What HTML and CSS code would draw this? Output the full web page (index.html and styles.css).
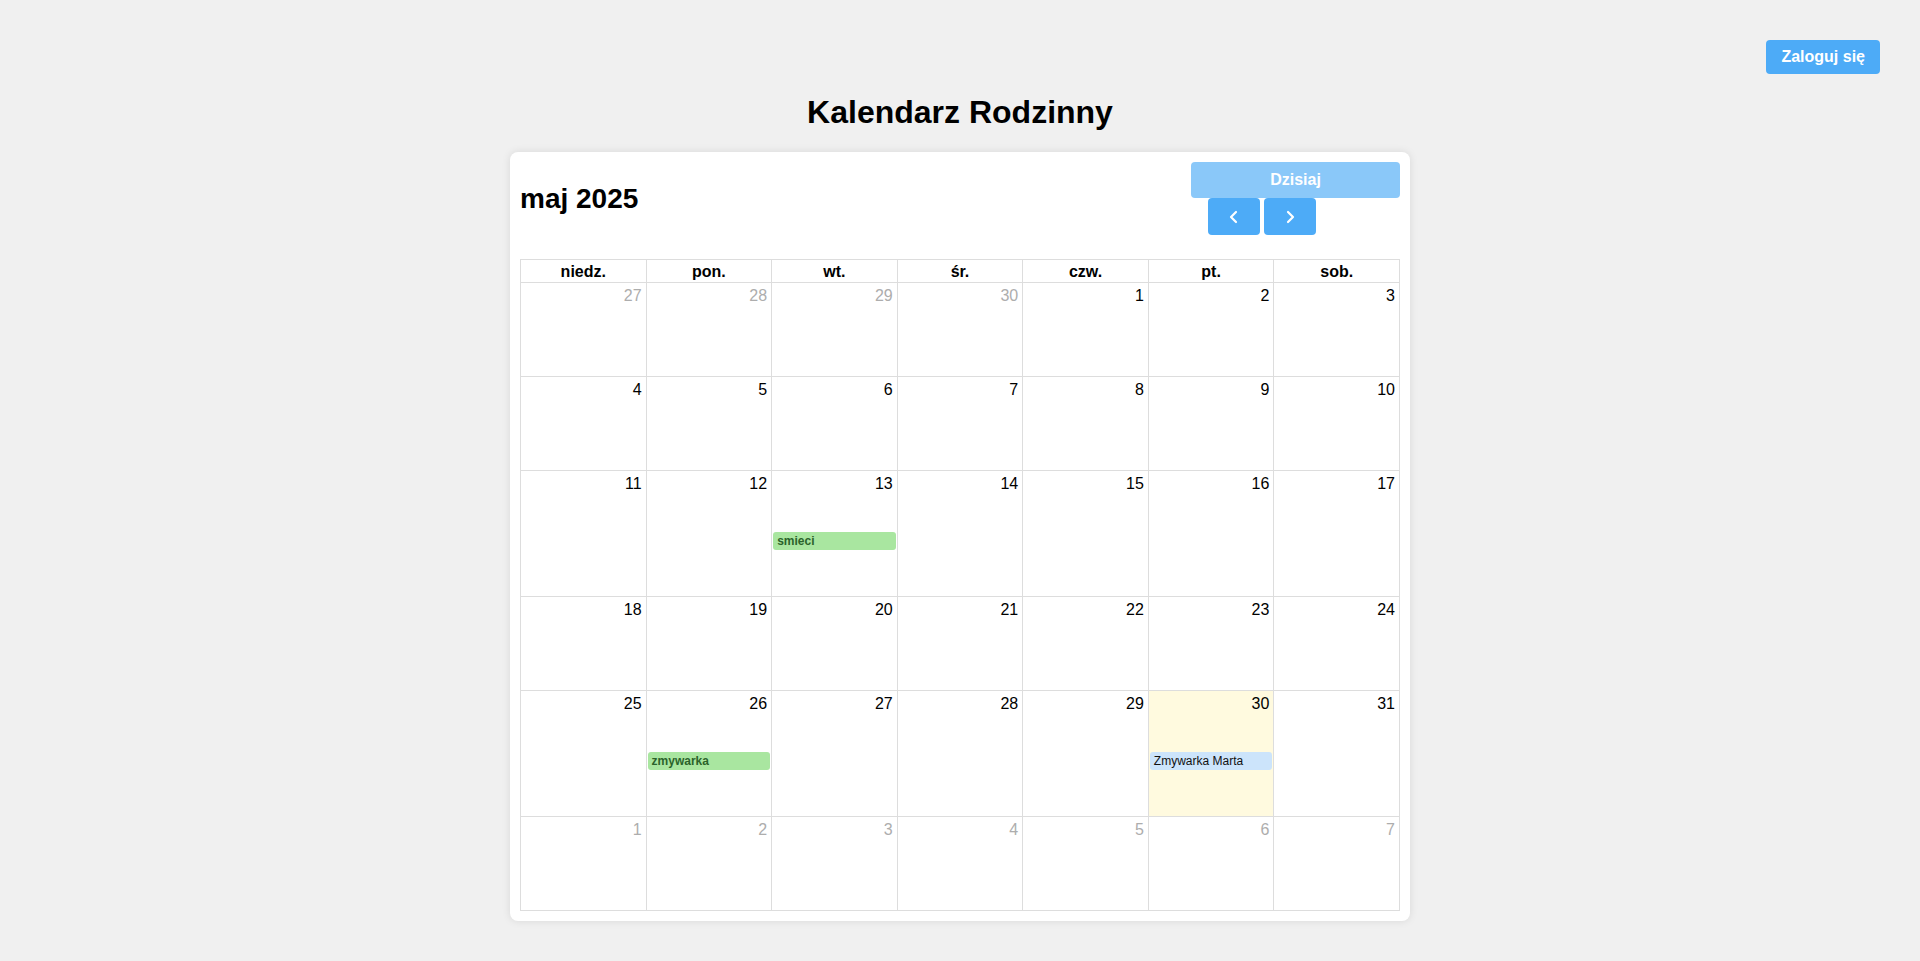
FILE: index.html
```html
<!DOCTYPE html>
<html lang="pl">
<head>
<meta charset="utf-8">
<title>Kalendarz Rodzinny</title>
<link rel="stylesheet" href="styles.css">
</head>
<body>
<header class="topbar">
  <button class="btn login">Zaloguj się</button>
</header>
<h1 class="page-title">Kalendarz Rodzinny</h1>
<main class="card">
  <div class="toolbar">
    <h2 class="month-title">maj 2025</h2>
    <div class="toolbar-right">
      <button class="btn today" disabled>Dzisiaj</button>
      <div class="nav-group">
        <button class="btn nav" aria-label="poprzedni"><svg width="12" height="14" viewBox="0 0 12 14"><polyline points="8,2 3,7 8,12" fill="none" stroke="#fff" stroke-width="2.2" stroke-linecap="round" stroke-linejoin="round"/></svg></button>
        <button class="btn nav" aria-label="następny"><svg width="12" height="14" viewBox="0 0 12 14"><polyline points="4,2 9,7 4,12" fill="none" stroke="#fff" stroke-width="2.2" stroke-linecap="round" stroke-linejoin="round"/></svg></button>
      </div>
    </div>
  </div>
  <table class="cal">
    <thead>
      <tr><th>niedz.</th><th>pon.</th><th>wt.</th><th>śr.</th><th>czw.</th><th>pt.</th><th>sob.</th></tr>
    </thead>
    <tbody>
      <tr>
        <td><div class="day other"><div class="num">27</div></div></td>
        <td><div class="day other"><div class="num">28</div></div></td>
        <td><div class="day other"><div class="num">29</div></div></td>
        <td><div class="day other"><div class="num">30</div></div></td>
        <td><div class="day"><div class="num">1</div></div></td>
        <td><div class="day"><div class="num">2</div></div></td>
        <td><div class="day"><div class="num">3</div></div></td>
      </tr>
      <tr>
        <td><div class="day"><div class="num">4</div></div></td>
        <td><div class="day"><div class="num">5</div></div></td>
        <td><div class="day"><div class="num">6</div></div></td>
        <td><div class="day"><div class="num">7</div></div></td>
        <td><div class="day"><div class="num">8</div></div></td>
        <td><div class="day"><div class="num">9</div></div></td>
        <td><div class="day"><div class="num">10</div></div></td>
      </tr>
      <tr>
        <td><div class="day"><div class="num">11</div></div></td>
        <td><div class="day"><div class="num">12</div></div></td>
        <td><div class="day"><div class="num">13</div><div class="events"><div class="event green">smieci</div></div></div></td>
        <td><div class="day"><div class="num">14</div></div></td>
        <td><div class="day"><div class="num">15</div></div></td>
        <td><div class="day"><div class="num">16</div></div></td>
        <td><div class="day"><div class="num">17</div></div></td>
      </tr>
      <tr>
        <td><div class="day"><div class="num">18</div></div></td>
        <td><div class="day"><div class="num">19</div></div></td>
        <td><div class="day"><div class="num">20</div></div></td>
        <td><div class="day"><div class="num">21</div></div></td>
        <td><div class="day"><div class="num">22</div></div></td>
        <td><div class="day"><div class="num">23</div></div></td>
        <td><div class="day"><div class="num">24</div></div></td>
      </tr>
      <tr>
        <td><div class="day"><div class="num">25</div></div></td>
        <td><div class="day"><div class="num">26</div><div class="events"><div class="event green">zmywarka</div></div></div></td>
        <td><div class="day"><div class="num">27</div></div></td>
        <td><div class="day"><div class="num">28</div></div></td>
        <td><div class="day"><div class="num">29</div></div></td>
        <td class="today-cell"><div class="day"><div class="num">30</div><div class="events"><div class="event blue">Zmywarka Marta</div></div></div></td>
        <td><div class="day"><div class="num">31</div></div></td>
      </tr>
      <tr>
        <td><div class="day other"><div class="num">1</div></div></td>
        <td><div class="day other"><div class="num">2</div></div></td>
        <td><div class="day other"><div class="num">3</div></div></td>
        <td><div class="day other"><div class="num">4</div></div></td>
        <td><div class="day other"><div class="num">5</div></div></td>
        <td><div class="day other"><div class="num">6</div></div></td>
        <td><div class="day other"><div class="num">7</div></div></td>
      </tr>
    </tbody>
  </table>
</main>
</body>
</html>
```

FILE: styles.css
```css
html, body {
  margin: 0;
  padding: 0;
}
body {
  background: #f0f0f0;
  font-family: "Liberation Sans", Arial, sans-serif;
  color: #000;
  min-height: 961px;
}
.topbar {
  display: flex;
  justify-content: flex-end;
  padding: 40px 40px 0 0;
}
.btn {
  font-family: "Liberation Sans", Arial, sans-serif;
  font-size: 16px;
  font-weight: bold;
  color: #fff;
  background: #4dabf7;
  border: none;
  border-radius: 4px;
  cursor: pointer;
}
.login {
  height: 34px;
  padding: 0 15px;
}
.page-title {
  text-align: center;
  font-size: 32px;
  font-weight: bold;
  margin: 20px 0 21px;
  line-height: normal;
}
.card {
  width: 880px;
  margin: 0 auto;
  padding: 10px;
  background: #fff;
  border-radius: 8px;
  box-shadow: 0 0 8px rgba(0, 0, 0, 0.1);
}
.toolbar {
  display: flex;
  justify-content: space-between;
  align-items: center;
  margin-bottom: 24px;
}
.month-title {
  margin: 0;
  font-size: 28px;
  font-weight: bold;
}
.toolbar-right {
  width: 209px;
  display: flex;
  flex-direction: column;
}
.today {
  height: 36px;
  width: 209px;
  opacity: 0.65;
  cursor: default;
}
.nav-group {
  display: flex;
  gap: 4px;
  margin-left: 17px;
}
.nav {
  width: 52px;
  height: 37px;
  display: flex;
  align-items: center;
  justify-content: center;
  padding: 0;
}
.cal {
  width: 880px;
  border-collapse: collapse;
  table-layout: fixed;
}
.cal th, .cal td {
  border: 1px solid #ddd;
  padding: 0;
}
.cal th {
  font-size: 16px;
  font-weight: bold;
  padding: 3px 0 1px;
  text-align: center;
}
.cal td {
  vertical-align: top;
}
.today-cell {
  background: #fffadf;
}
.day {
  min-height: 93px;
}
.num {
  text-align: right;
  font-size: 16px;
  padding: 4px 4px 1px;
}
.other .num {
  color: #adadad;
}
.events {
  padding: 38px 0 46px;
}
.event {
  margin: 0 1px;
  height: 18px;
  line-height: 18px;
  font-size: 12px;
  padding: 0 4px;
  border-radius: 3px;
  white-space: nowrap;
  overflow: hidden;
}
.event.green {
  background: #a9e6a0;
  color: #2b632b;
  font-weight: bold;
}
.event.blue {
  background: #cce4fb;
  color: #111;
}
```
